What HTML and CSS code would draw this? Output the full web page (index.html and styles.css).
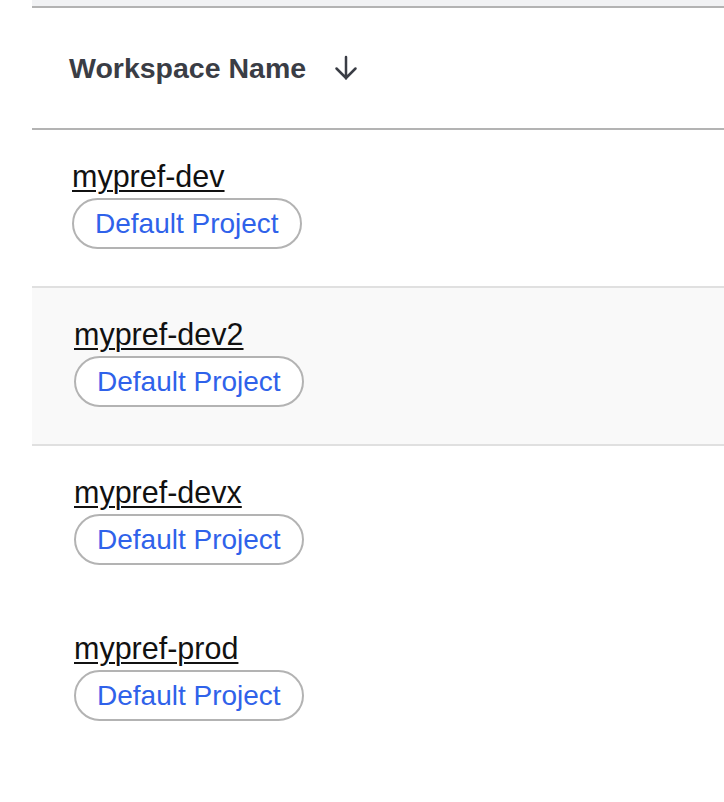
FILE: index.html
```html
<!DOCTYPE html>
<html lang="en">
<head>
<meta charset="utf-8">
<title>Workspaces</title>
<link rel="stylesheet" href="styles.css">
</head>
<body>
<div class="table">
  <div class="topbar"></div>
  <div class="header">
    <span class="th">Workspace Name</span>
    <svg class="sort" width="24" height="26" viewBox="0 0 24 26" fill="none" stroke="currentColor" stroke-width="2.5" stroke-linecap="round" stroke-linejoin="round"><path d="M12 2v21.5M2.5 13.5l9.5 9.5 9.5-9.5"/></svg>
  </div>
  <div class="row bordered first">
    <a class="name" href="#">mypref-dev</a>
    <span class="pill">Default Project</span>
  </div>
  <div class="row bordered hover">
    <a class="name" href="#">mypref-dev2</a>
    <span class="pill">Default Project</span>
  </div>
  <div class="row">
    <a class="name" href="#">mypref-devx</a>
    <span class="pill">Default Project</span>
  </div>
  <div class="row">
    <a class="name" href="#">mypref-prod</a>
    <span class="pill">Default Project</span>
  </div>
</div>
</body>
</html>
```
FILE: styles.css
```css
html, body {
  margin: 0;
  padding: 0;
  background: #ffffff;
  font-family: "Liberation Sans", Arial, sans-serif;
}

.table {
  margin-left: 32px;
  width: 692px;
  overflow: hidden;
}

.topbar {
  height: 6px;
  background: #f1f2f4;
  border-bottom: 2px solid #b3b3b3;
}

.header {
  height: 120px;
  display: flex;
  align-items: center;
  padding-left: 37px;
  border-bottom: 2px solid #b3b3b3;
  color: #3a3d45;
}

.th {
  font-size: 28.5px;
  font-weight: 700;
  line-height: 34px;
}

.sort {
  margin-left: 28px;
  margin-top: 0;
}

.row {
  height: 156px;
  box-sizing: border-box;
  padding: 29px 0 0 42px;
  display: flex;
  flex-direction: column;
  align-items: flex-start;
  border-bottom: 2px solid #ffffff;
}

.row.first {
  padding-left: 40px;
}

.row.bordered {
  height: 158px;
  border-bottom-color: #e0e0e0;
}

.row.hover {
  background: #f9f9f9;
}

.name {
  font-size: 30.5px;
  line-height: 34px;
  color: #111111;
  text-decoration: underline;
  text-decoration-thickness: 2px;
  text-underline-offset: 3px;
}

.pill {
  margin-top: 5px;
  font-size: 28px;
  line-height: 47px;
  padding: 0 21px;
  border: 2px solid #b3b3b3;
  border-radius: 999px;
  background: #ffffff;
  color: #2f62ea;
}
```
